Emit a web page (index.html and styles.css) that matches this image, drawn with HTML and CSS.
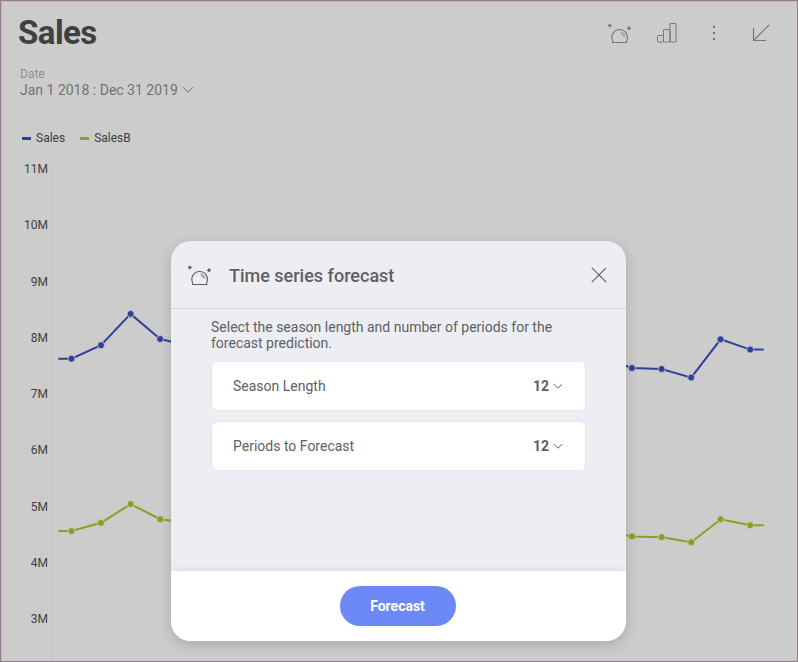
FILE: index.html
```html
<!DOCTYPE html>
<html lang="en">
<head>
<meta charset="utf-8">
<title>Sales</title>
<link rel="stylesheet" href="styles.css">
</head>
<body>
<svg class="defs" width="0" height="0" aria-hidden="true">
  <symbol id="crystal-ball" viewBox="0 0 26 22">
    <path d="M4.600 20.500v-1.900A7.800 7.800 0 1 1 18.700 18.600v1.900z" fill="none" stroke="currentColor" stroke-width="1.100" stroke-linejoin="round"/>
    <path d="M12.300 9.800A5.700 5.700 0 0 1 17.200 14.800M12.900 11.500A4 4 0 0 1 15.600 14.200" fill="none" stroke="currentColor" stroke-width=".8" stroke-opacity=".85"/>
    <path d="M1.800 1.700l.7 1.100 1.100.7-1.100.7-.7 1.100-.7-1.100L0 3.500l1.100-.7zM21 4.400l.7 1.100 1.100.7-1.100.7-.7 1.100-.7-1.100-1.100-.7 1.100-.7z" fill="currentColor" stroke="currentColor" stroke-width=".8"/>
  </symbol>
</svg>
<div class="dashboard">
  <header class="topbar">
    <h1 class="title">Sales</h1>
    <div class="tools">
      <svg class="ball" width="26" height="22"><use href="#crystal-ball"/></svg>
      <svg class="bars" width="22" height="22" fill="none" stroke="currentColor"><rect x="1.500" y="13.500" width="6" height="6.500" rx=".8"/><rect x="7.500" y="7.500" width="6.500" height="12.500" rx=".8"/><rect x="14" y="1.500" width="6" height="18.500" rx=".8"/></svg>
      <svg class="dots" width="4" height="16" fill="currentColor"><circle cx="2" cy="2" r="1.200"/><circle cx="2" cy="8" r="1.200"/><circle cx="2" cy="14" r="1.200"/></svg>
      <svg class="collapse" width="18" height="18" fill="none" stroke="currentColor" stroke-width="1.200"><path d="M1.500 4v12.500H14M1.500 16.500L17 1"/></svg>
    </div>
  </header>
  <div class="filter">
    <div class="filter-name">Date</div>
    <div class="filter-value">Jan 1 2018 : Dec 31 2019<svg width="12" height="8" fill="none" stroke="currentColor"><path d="M1 1.200l5 5 5-5"/></svg></div>
  </div>
  <div class="legend">
    <span class="key"><i class="swatch blue"></i>Sales</span>
    <span class="key"><i class="swatch green"></i>SalesB</span>
  </div>
  <div class="chart">
    <div class="axis"><span>11M</span><span>10M</span><span>9M</span><span>8M</span><span>7M</span><span>6M</span><span>5M</span><span>4M</span><span>3M</span></div>
    <svg class="plot" width="746" height="496" viewBox="51 165 746 496">
      <path class="rule" d="M51.500 165v496"/>
      <g class="series blue">
        <path d="M58.300 358.700H71.500L101 345.200 130.600 313.900 160.200 339 190 346M612 361L632 368 661.600 369 691.200 377.600 720.600 339.300 750.200 349.600H763.700"/>
        <circle cx="71.500" cy="358.700" r="3.500"/><circle cx="101" cy="345.200" r="3.500"/><circle cx="130.600" cy="313.900" r="3.500"/><circle cx="160.200" cy="339" r="3.500"/>
        <circle cx="632" cy="368" r="3.500"/><circle cx="661.600" cy="369" r="3.500"/><circle cx="691.200" cy="377.600" r="3.500"/><circle cx="720.600" cy="339.300" r="3.500"/><circle cx="750.200" cy="349.600" r="3.500"/>
      </g>
      <g class="series green">
        <path d="M58.300 531H71.500L101 522.800 130.600 504.100 160.200 519.200 190 523M612 533L632 536.500 661.600 537.200 691.200 542.200 720.600 519.300 750.200 525.300H763.700"/>
        <circle cx="71.500" cy="531" r="3.500"/><circle cx="101" cy="522.800" r="3.500"/><circle cx="130.600" cy="504.100" r="3.500"/><circle cx="160.200" cy="519.200" r="3.500"/>
        <circle cx="632" cy="536.500" r="3.500"/><circle cx="661.600" cy="537.200" r="3.500"/><circle cx="691.200" cy="542.200" r="3.500"/><circle cx="720.600" cy="519.300" r="3.500"/><circle cx="750.200" cy="525.300" r="3.500"/>
      </g>
    </svg>
  </div>
</div>
<section class="dialog" role="dialog">
  <header class="dialog-head">
    <svg width="26" height="22"><use href="#crystal-ball"/></svg>
    <h2>Time series forecast</h2>
    <svg class="close" width="16" height="16" fill="none" stroke="currentColor" stroke-width="1.200"><path d="M.8.800l14.400 14.400M15.200.800L.8 15.200"/></svg>
  </header>
  <div class="dialog-body">
    <p>Select the season length and number of periods for the forecast prediction.</p>
    <div class="option"><span class="option-name">Season Length</span><b>12</b><svg width="10" height="7" fill="none" stroke="currentColor"><path d="M1 1.200l4 4 4-4"/></svg></div>
    <div class="option"><span class="option-name">Periods to Forecast</span><b>12</b><svg width="10" height="7" fill="none" stroke="currentColor"><path d="M1 1.200l4 4 4-4"/></svg></div>
  </div>
  <footer class="dialog-foot"><button>Forecast</button></footer>
</section>
</body>
</html>
```
FILE: styles.css
```css
* { box-sizing: border-box; }
body { margin: 0; font-family: Roboto, "Liberation Sans", sans-serif; color: #404040; }
svg { display: block; flex: none; }
.defs { position: absolute; }
h1, h2, p { margin: 0; }

.dashboard {
  display: flex;
  flex-direction: column;
  width: 798px;
  height: 662px;
  overflow: hidden;
  background: #ccc;
  border: 1px solid #957c8f;
  box-shadow: inset 1px 1px 0 rgba(149, 124, 143, .25);
}
.topbar { display: flex; justify-content: space-between; height: 66px; padding: 13px 27px 0 17px; }
.title { font-size: 33px; line-height: 38px; font-weight: 700; letter-spacing: -0.55px; }
.tools { display: flex; align-items: flex-start; color: #777; }
.ball { margin: 8px 22px 0 0; }
.bars { margin: 8px 34px 0 0; }
.dots { margin: 11px 36px 0 0; }
.collapse { margin-top: 10px; }

.filter { padding-left: 19px; height: 64px; }
.filter-name { font-size: 12px; line-height: 14px; color: #8f8f8f; }
.filter-value { display: flex; align-items: center; gap: 4px; font-size: 14px; line-height: 18px; color: #737373; }

.legend { display: flex; gap: 15px; height: 34px; padding-left: 21px; font-size: 12px; line-height: 15px; }
.key { display: flex; gap: 5px; }
.swatch { width: 9px; height: 3px; margin-top: 6px; }
.swatch.blue { background: #314099; }
.swatch.green { background: #8ba023; }

.chart { display: flex; }
.axis { display: flex; flex-direction: column; width: 50px; margin-top: -24px; padding-right: 3px; font-size: 12px; text-align: right; }
.axis span { height: 56.25px; line-height: 56.25px; }
.rule { stroke: #c2c2c2; }
.series path { fill: none; stroke-width: 2; }
.series circle { stroke: #ccc; stroke-width: 1; stroke-opacity: .8; }
.series.blue path { stroke: #314099; }
.series.blue circle { fill: #314099; }
.series.green path { stroke: #8ba023; }
.series.green circle { fill: #8ba023; }

.dialog {
  position: absolute;
  left: 171px;
  top: 241px;
  display: flex;
  flex-direction: column;
  width: 455px;
  height: 400px;
  overflow: hidden;
  color: #5f6062;
  background: #edeef4;
  border-radius: 20px;
  box-shadow: 0 4px 14px rgba(0, 0, 0, .16);
}
.dialog-head { display: flex; align-items: center; height: 68px; padding: 0 19px 0 17px; border-bottom: 1px solid #d3d4d9; }
.dialog-head h2 { flex: 1; margin-left: 15px; padding-top: 2px; font-size: 18px; font-weight: 500; line-height: 22px; }
.dialog-body { display: flex; flex: 1; flex-direction: column; gap: 10px; padding: 10px 40px 0; }
.dialog-body p { height: 32px; font-size: 14px; line-height: 16px; }
.option { display: flex; align-items: center; height: 50px; padding: 0 22px 0 21px; font-size: 14px; background: #fff; border: 1px solid #e5e5e8; border-radius: 6px; }
.option-name { flex: 1; }
.option b { margin-right: 4px; font-size: 14px; }
.dialog-foot { display: flex; justify-content: center; height: 70px; padding: 15px 2px 0 0; background: #fff; box-shadow: 0 0 10px rgba(0, 0, 0, .1); }
.dialog-foot button { width: 116px; height: 40px; padding: 0; font: 700 14px Roboto, sans-serif; color: #fff; background: #6d89f7; border: 0; border-radius: 20px; }
```
